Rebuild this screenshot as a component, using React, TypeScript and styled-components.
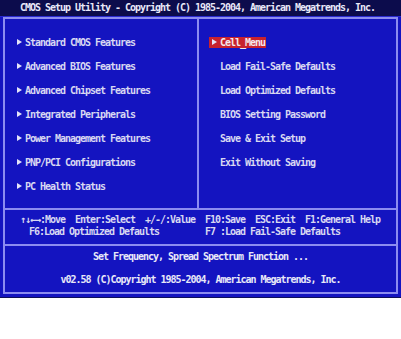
import styled, { createGlobalStyle } from 'styled-components'

const GlobalStyle = createGlobalStyle`
  html, body {
    margin: 0;
    padding: 0;
    background: #ffffff;
  }
`

const Screen = styled.div`
  width: 401px;
  height: 298px;
  box-sizing: border-box;
  background: #1414c0;
  border-bottom: 1px solid #10105a;
  font-family: 'DejaVu Sans Mono', 'Liberation Mono', monospace;
  font-size: 10px;
  font-weight: bold;
  letter-spacing: -1.02px;
  color: #d8d8f2;
  white-space: pre;
  overflow: hidden;
`

const TitleBar = styled.div`
  height: 16px;
  line-height: 16px;
  background: #0c0c4c;
  color: #e8e8f8;
  text-align: center;
  padding-right: 6px;
  border-bottom: 1px solid #2a2ad0;
`

const Frame = styled.div`
  margin: 0 3px 0 3px;
  border: 2px solid #8c8cf0;
`

const MenuGrid = styled.div`
  display: grid;
  grid-template-columns: 192px 1fr;
  border-bottom: 2px solid #8c8cf0;
`

const MenuColumn = styled.div<{ $divider?: boolean; $pad: number }>`
  display: flex;
  flex-direction: column;
  padding: 11px 0 10px ${({ $pad }) => $pad}px;
  border-left: ${({ $divider }) => ($divider ? '2px solid #8c8cf0' : 'none')};
`

const MenuItem = styled.div`
  height: 24px;
  display: flex;
  align-items: center;
`

const ItemLabel = styled.span<{ $selected?: boolean }>`
  display: flex;
  align-items: center;
  gap: 3px;
  height: 11px;
  padding: 0 ${({ $selected }) => ($selected ? '1px' : '0')} 0 3px;
  margin-left: -3px;
  background: ${({ $selected }) => ($selected ? '#c8222e' : 'transparent')};
  color: ${({ $selected }) => ($selected ? '#f4e8ec' : '#d8d8f2')};
  line-height: 11px;
`

const Arrow = styled.span<{ $hidden?: boolean }>`
  width: 0;
  height: 0;
  border-top: 3px solid transparent;
  border-bottom: 3px solid transparent;
  border-left: 5px solid ${({ $hidden }) => ($hidden ? 'transparent' : '#e4e4f8')};
`

const KeyGrid = styled.div`
  display: grid;
  grid-template-columns: 200px 1fr;
  padding: 4px 0 6px;
  border-bottom: 2px solid #8c8cf0;
`

const KeyColumn = styled.div<{ $pad: number }>`
  display: flex;
  flex-direction: column;
  padding-left: ${({ $pad }) => $pad}px;
`

const KeyLine = styled.div<{ $indent?: number }>`
  height: 12px;
  line-height: 12px;
  padding-left: ${({ $indent }) => $indent || 0}px;
`

const Status = styled.div`
  display: flex;
  flex-direction: column;
  align-items: center;
  gap: 11px;
  padding: 5px 0 6px;
`

const StatusLine = styled.div`
  height: 12px;
  line-height: 12px;
  color: #e8e8f8;
`

const leftItems = [
  'Standard CMOS Features',
  'Advanced BIOS Features',
  'Advanced Chipset Features',
  'Integrated Peripherals',
  'Power Management Features',
  'PNP/PCI Configurations',
  'PC Health Status',
]

const rightItems = [
  'Cell_Menu',
  'Load Fail-Safe Defaults',
  'Load Optimized Defaults',
  'BIOS Setting Password',
  'Save & Exit Setup',
  'Exit Without Saving',
]

export default function App() {
  return (
    <>
      <GlobalStyle />
      <Screen>
        <TitleBar>CMOS Setup Utility - Copyright (C) 1985-2004, American Megatrends, Inc.</TitleBar>
        <Frame>
          <MenuGrid>
            <MenuColumn $pad={12}>
              {leftItems.map((item) => (
                <MenuItem key={item}>
                  <ItemLabel>
                    <Arrow />
                    {item}
                  </ItemLabel>
                </MenuItem>
              ))}
            </MenuColumn>
            <MenuColumn $divider $pad={13}>
              {rightItems.map((item, i) => (
                <MenuItem key={item}>
                  <ItemLabel $selected={i === 0}>
                    <Arrow $hidden={i !== 0} />
                    {item}
                  </ItemLabel>
                </MenuItem>
              ))}
            </MenuColumn>
          </MenuGrid>
          <KeyGrid>
            <KeyColumn $pad={15}>
              <KeyLine>{'↑↓←→:Move  Enter:Select  +/-/:Value'}</KeyLine>
              <KeyLine $indent={9}>F6:Load Optimized Defaults</KeyLine>
            </KeyColumn>
            <KeyColumn $pad={0}>
              <KeyLine>{'F10:Save  ESC:Exit  F1:General Help'}</KeyLine>
              <KeyLine>F7 :Load Fail-Safe Defaults</KeyLine>
            </KeyColumn>
          </KeyGrid>
          <Status>
            <StatusLine>Set Frequency, Spread Spectrum Function ...</StatusLine>
            <StatusLine>v02.58 (C)Copyright 1985-2004, American Megatrends, Inc.</StatusLine>
          </Status>
        </Frame>
      </Screen>
    </>
  )
}
